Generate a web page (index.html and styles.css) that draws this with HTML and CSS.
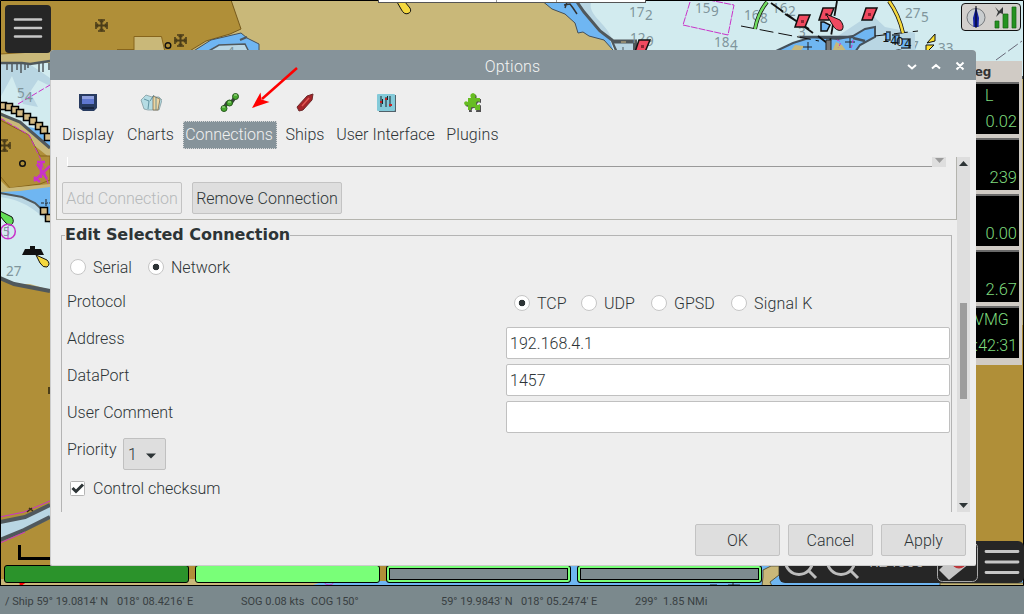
FILE: index.html
```html
<!DOCTYPE html>
<html lang="en">
<head>
<meta charset="utf-8">
<title>Options</title>
<link rel="stylesheet" href="styles.css">
</head>
<body>
<div class="screen">
  <main class="chart">
    <svg class="map" width="1024" height="586" viewBox="0 0 1024 586">
      <defs>
        <g id="church" fill="none" stroke="#4b3d18"><path d="M0-6V6M-6 0H6" stroke-width="2"/><path d="M-3.500-5.500H3.500M-3.500 5.500H3.500M-5.500-3.500V3.500M5.500-3.500V3.500" stroke-width="1.600"/><path d="M-2-4H2M-2 4H2M-4-2V2M4-2V2" stroke-width="1.400"/></g>
        <g id="buoy"><path d="M-3-6H8L3 6H-7Z" fill="#f04a60" stroke="#111" stroke-width="1.500"/><path d="M-1-1H2V2H-1Z" fill="#8d2534"/></g>
        <path id="tile" d="M-3.500-3.500H3.500V3.500H-3.500Z" fill="#d2b983" stroke="#000" stroke-width="1.500"/>
      </defs>
      <rect width="1024" height="586" fill="#b08f38"/>
      <!-- north-west shore -->
      <path d="M231 0H620V52H188L206 41L230 34L241 29Z" fill="#c9b879" stroke="#76591c"/>
      <path d="M134 52V36.500H161.500L165 52Z" fill="#c9b879" stroke="#87651c"/>
      <path d="M0 54L50 50V64L0 63Z" fill="#c9b879"/>
      <path d="M0 54L50 51M117 49.500H134" fill="none" stroke="#87651c"/>
      <path d="M0 63H50V155L24 126L0 112Z" fill="#d2ebef"/>
      <path d="M0 63H28L50 78V86L38 80L30 92L38 107L23 104L12 76L0 98Z" fill="#b9d6e3"/>
      <path d="M0 63H22L30 64L50 61" fill="none" stroke="#50585c" stroke-width="2.500"/>
      <path d="M7 63V70M12 63V72M17 63V70M21 63V73M25 63V70M28 63V68M39 63V72M43 63V72M49 63V70" stroke="#50585c" stroke-width="1.500"/>
      <path d="M24 126L44 130L50 138V150Z" fill="#6fb6f2"/>
      <path d="M0 112L22 123L50 147V158L35 146L20 130L0 118Z" fill="#c9b879"/>
      <path d="M0 114L20 122L50 148" fill="none" stroke="#50585c" stroke-width="3"/>
      <path d="M0 120L29 135L40 156H50V180L40 184L10 188L0 176V120Z" fill="#b08f38" stroke="#87651c"/>
      <path d="M18 104L50 85M0 118L29 135L41 160L50 190" stroke="#c933c9" fill="none" stroke-dasharray="6 2"/>
      <use href="#tile" x="3" y="106"/><use href="#tile" x="9" y="107"/><use href="#tile" x="15" y="110"/><use href="#tile" x="20" y="113"/><use href="#tile" x="27" y="117"/><use href="#tile" x="33" y="121"/><use href="#tile" x="39" y="126"/><use href="#tile" x="44" y="130"/><use href="#tile" x="48" y="137"/>
      <g class="sounding"><text x="17" y="98">5</text><text x="25" y="102">4</text></g>
      <path d="M192 52L211 40L241 33L247 38L259 44V52Z" fill="#6fb6f2" stroke="#44505a"/>
      <path d="M207 52L219 45L245 44L249 52Z" fill="#b9d6e3" stroke="#50585c" stroke-width="1.500"/>
      <path d="M240 40L247 37" stroke="#50585c" stroke-width="2"/>
      <text class="sounding" x="227" y="57">4</text>
      <use href="#church" x="101.500" y="25.500"/><use href="#church" x="180.500" y="40.500"/><use href="#church" x="4.500" y="145.500"/>
      <circle cx="168" cy="45.500" r="2.800" fill="none" stroke="#111" stroke-width="1.400"/>
      <!-- west bay -->
      <path d="M0 180L8 188L50 184V295H0Z" fill="#c9b879"/>
      <path d="M0 192L20 191L50 187V220L34 202L0 193Z" fill="#6fb6f2"/>
      <path d="M0 194L25 198L37 205L50 219V290L30 284L12 284L0 278Z" fill="#d2ebef"/>
      <path d="M0 197C25 200 38 212 50 224V215L35 203L22 197L0 193Z" fill="#b9d6e3"/>
      <path d="M0 193L22 197L35 203L50 217" fill="none" stroke="#50585c" stroke-width="2"/>
      <path d="M0 277L14 284L50 290V300H0Z" fill="#b08f38"/>
      <path d="M0 278L14 284L50 291" fill="none" stroke="#50585c" stroke-width="4"/>
      <circle cx="22.500" cy="163.500" r="2.800" fill="none" stroke="#111" stroke-width="1.500"/>
      <path d="M34 181L50 166M37 162H45M37 164L47 179M41 163V178M34 177L40 182" fill="none" stroke="#c933c9" stroke-width="2.500"/>
      <path d="M41 203H50M46 199V212" stroke="#222" stroke-dasharray="3 1"/>
      <use href="#tile" x="44" y="211"/><use href="#tile" x="49" y="218"/>
      <path d="M0 211L12 217Q15 222 11 225Q8 226 5 222L0 216Z" fill="#61dd55" stroke="#111"/>
      <circle cx="8" cy="231.500" r="7.300" fill="none" stroke="#c933c9" stroke-width="1.500"/><path d="M8 226V238" stroke="#c933c9"/>
      <text class="sounding small" x="3" y="236">5</text>
      <path d="M22 255L25 249H30V246H35V249H41L44 255Z" fill="#111"/>
      <path d="M36 255L47 260Q51 264 47 267Q43 268 40 263Z" fill="#f4d83e" stroke="#111"/>
      <text class="sounding" x="6" y="276">27</text>
      <path d="M48 387H51V394H48Z" fill="#4b3d18"/>
      <path d="M0 522L25 517L50 506V519L24 531L0 540Z" fill="#b9d6e3"/>
      <path d="M0 522L25 517L50 505M0 540L24 530L50 517" stroke="#50585c" stroke-width="4" fill="none"/>
      <path d="M0 517L24 512L50 501M0 543L25 532" stroke="#c933c9" fill="none"/>
      <path d="M27 512L32 508M29 508L33 511" stroke="#3b3014" stroke-width="1.500"/>
      <path d="M19.500 545V558.500H52" stroke="#000" stroke-width="3" fill="none"/>
      <!-- northern fairway -->
      <path d="M541 0L552 9L565 14L575 23L578 33L583 32L589 36L604 40L613 50H1024V0Z" fill="#6fb6f2" stroke="#44505a"/>
      <path d="M577 0L595 23L609 37L614 52H976V78H1024V0Z" fill="#d2ebef"/>
      <path d="M577 0H592C585 14 606 22 612 39L600 33Z" fill="#b9d6e3"/>
      <path d="M577 2L584 12L600 31L612 40L617 52" fill="none" stroke="#50585c" stroke-width="3"/>
      <path d="M614 43H634L637 52H618Z" fill="#b9d6e3"/>
      <path d="M612 41.500H635V52" fill="none" stroke="#50585c" stroke-width="4"/><path d="M621 42H626" stroke="#d2b983"/><path d="M623 47V52" stroke="#50585c"/>
      <path d="M564 5L570 4L573 8L577 14M567 2L565 8" fill="none" stroke="#333" stroke-width="1.500"/>
      <path d="M397 2H405L410 8Q412 12 408 13.500Q404 15 401 9Z" fill="#f4d83e" stroke="#111"/>
      <path d="M690 2L683 25L728 35L734 5L709 0" fill="none" stroke="#c933c9" stroke-dasharray="7 1"/>
      <g class="sounding">
        <text x="629" y="17">17</text><text x="645" y="20">2</text>
        <text x="630" y="43">12</text><text x="646" y="46">9</text>
        <text x="695" y="13">15</text><text x="711" y="16">9</text>
        <text x="714" y="47">18</text><text x="730" y="50">4</text>
        <text x="744" y="20">16</text><text x="760" y="23">8</text>
        <text x="772" y="13">16</text><text x="788" y="16">2</text>
        <text x="905" y="18">27</text><text x="921" y="22">5</text>
        <text x="911" y="51">7</text><text x="938" y="53">33</text><text x="798" y="37">3</text><text x="862" y="27">31</text>
      </g>
      <use href="#buoy" x="642" y="46"/>
      <path d="M835 38L859 22L871 14L885 27L915 33V52H835Z" fill="#b9d6e3"/>
      <path d="M774 52L793 43L812 37L838 39L853 36L865 29L875 27V37L860 45L855 52Z" fill="#6fb6f2" stroke="#44505a" stroke-width="2"/>
      <path d="M790 52L795 45L804 46L800 52M832 52L836 42L842 45L847 52Z" fill="#c9b879"/>
      <path d="M800 37H853M853 38L865 41" stroke="#44505a" stroke-width="2.500"/>
      <path d="M741 26L819 41M875 36L918 31" stroke="#111" stroke-dasharray="14 5" fill="none"/>
      <path d="M771 3L813 33M785 14L809 29M837 1L830 42M818 36L827 43" stroke="#111" stroke-width="1.800" stroke-dasharray="15 4" fill="none"/>
      <path d="M767 2Q758 13 755 29" stroke="#111" stroke-width="4" fill="none"/><path d="M767 2Q758 13 755 29" stroke="#72dc62" stroke-width="2.500" fill="none"/>
      <path d="M889 1Q899 15 903 33" stroke="#111" stroke-width="4" fill="none"/><path d="M889 1Q899 15 903 33" stroke="#f4d83e" stroke-width="2.500" fill="none"/>
      <use href="#buoy" x="802" y="21"/><use href="#buoy" x="826" y="14"/><use href="#buoy" x="869" y="14"/>
      <path d="M826 14L840 20Q845 26 842 30Q836 32 832 24Z" fill="#f04a60" stroke="#111"/>
      <path d="M821 22V31H827L830 25L824 22Z" fill="#6fb6f2" stroke="#111" stroke-width="1.500"/>
      <path d="M826 40H831V52H826Z" fill="#777" stroke="#222"/>
      <path d="M803 47H812M808 42V52M845 42H855M850 38V48" stroke="#222"/>
      <path d="M837 40Q843 41 838 48M853 40L851 50" stroke="#c933c9" fill="none" stroke-dasharray="3 2"/>
      <path d="M886 32H890V40H885M892 35H899V43H892M902 39H910V48H901" stroke="#303b43" stroke-width="1.500" fill="#6fb6f2"/>
      <text class="depth" x="882" y="42">1</text><text class="depth" x="890" y="45">4</text><text class="depth" x="896" y="46">0</text><text class="depth" x="904" y="48">4</text>
      <path d="M893 52Q899 46 904 52Z" fill="#50585c"/>
      <path d="M927 43L935 34V41ZM926 45H934L926 53Z" fill="#ffe22e" stroke="#111"/>
      <path d="M996 60L1022 41" stroke="#667" stroke-dasharray="12 3"/>
      <path d="M976 365H1024V586H976Z" fill="#b08f38"/><path d="M1020 78H1024V325H1020Z" fill="#c9b879"/><path d="M1020 76H1024V79H1020Z" fill="#50585c"/>
      <path d="M0 579H380V586H0Z" fill="#c9b879"/><path d="M20 585L24 582" stroke="red" stroke-width="3"/>
      <path d="M310 586H1024V566H560V581H325Z" fill="#6fb6f2"/>
      <path d="M763 577V570L771 566H779V575L770 582L772 586H762ZM940 583H1024V586H940Z" fill="#c9b879" stroke="#5d573b"/>
      <circle cx="329" cy="579" r="6" stroke="#c933c9" fill="none"/>
      <path d="M710 585H717M728 585H740M733 583V586" stroke="#222"/>
      <path d="M.5 586V.5H1023.500V585.500H0" stroke="#000" fill="none"/>
    </svg>
    <div class="topstrip"><i></i><i></i></div>
    <button class="menu" aria-label="Menu"><svg width="46" height="48"><path d="M10 14.500H36M10 23H36M10 31.500H36" stroke="#c6c6c6" stroke-width="2.600" stroke-linecap="round"/></svg></button>
    <div class="gps">
      <svg width="60" height="29" viewBox="0 0 60 29">
        <circle cx="14" cy="13.500" r="9" fill="#c9cdcf" stroke="#75797c"/><path d="M14 3L17 14L16.500 23H11.500L11 14Z" fill="#1522a5"/><path d="M14 2V24" stroke="#000"/>
        <path d="M33 17H37V24H33ZM41 10H46V24H41ZM50 3H54V24H50Z" fill="#249320" stroke="#176414" stroke-width=".7"/><path d="M33 3L37 7L41 3V10L38 9L34 13L36 8Z" fill="#353839"/>
      </svg>
    </div>
    <aside class="dashboard">
      <div class="dash-title">Leg</div>
      <div class="gauge"><span class="name name-l">L</span><span>0.02</span></div>
      <div class="gauge"><span>239</span></div>
      <div class="gauge"><span>0.00</span></div>
      <div class="gauge"><span>2.67</span></div>
      <div class="gauge"><span class="name">VMG</span><span class="ttg">:42:31</span></div>
    </aside>
    <div class="keys"><i class="key dark"></i><i class="key light"></i><i class="key hollow"></i><i class="key hollow"></i></div>
    <div class="canvas-tools">
      <svg width="245" height="42" viewBox="0 0 245 42"><g fill="none" stroke="#bdbdbd" stroke-width="3"><circle cx="20" cy="20" r="13.500"/><path d="M29 29L37 37M16 21H24M20 17V25"/><circle cx="62" cy="20" r="13.500"/><path d="M71 29L79 37"/></g><rect x="158.500" y="1.500" width="40" height="39" rx="5" fill="none" stroke="#aaa"/><path d="M160 29L177 12L191 22L170 39Z" fill="#c6c6c6"/><circle cx="180" cy="20" r="7.500" fill="#bd373b"/><path d="M207 10.500H239M207 21H239M207 31.500H239" stroke="#c6c6c6" stroke-width="2.800" stroke-linecap="round"/></svg>
      <span class="scale">1:24000</span>
    </div>
  </main>
  <footer class="status"><span class="s1">/ Ship 59° 19.0814' N</span><span class="s2">018° 08.4216' E</span><span class="s3">SOG 0.08 kts</span><span class="s4">COG 150°</span><span class="s5">59° 19.9843' N</span><span class="s6">018° 05.2474' E</span><span class="s7">299°</span><span>1.85 NMi</span></footer>

  <section class="dialog">
    <header class="titlebar"><span class="title">Options</span>
      <svg class="winbtns" width="64" height="30"><g fill="none" stroke="#fff" stroke-width="2"><path d="M4 15L8 18.500L12 15M28 18.500L32 15L36 18.500M52.500 12.500L59.500 19.500M59.500 12.500L52.500 19.500"/></g></svg>
    </header>
    <nav class="tabs">
      <div class="tab t-display"><svg width="22" height="22"><path d="M2 3H20V17L17 20H6L2 17Z" fill="#283b60"/><path d="M5 5H17V13H5Z" fill="#6078d0"/><path d="M5 5H17V8H5Z" fill="#8fa0df"/><path d="M5 16H17V18H5Z" fill="#17243e"/></svg><span>Display</span></div>
      <div class="tab t-charts"><svg width="22" height="22"><path d="M1 9L6 4L12 6L19 6L22 9L19 19H8L4 18Z" fill="#b5dce4" stroke="#789298" stroke-width=".7"/><path d="M13 5L20 8L18 19H13Z" fill="#ebd6a5" stroke="#775f40" stroke-width=".7"/><path d="M4 8L9 10L8 18M16 6V19M10 10L14 4" fill="none" stroke="#4d8190" stroke-width=".8"/></svg><span>Charts</span></div>
      <div class="tab t-conn active"><svg width="22" height="22"><path d="M5 17L8 12L12 12L17 5" stroke="#3a423e" stroke-width="3.500" fill="none"/><g fill="#48a82f" stroke="#24581b"><circle cx="5" cy="17.500" r="3"/><circle cx="10.500" cy="12" r="3"/><circle cx="16.500" cy="5.500" r="3"/></g><path d="M3 16H6M15 4H18M9 11H12" stroke="#b0e398"/></svg><span>Connections</span></div>
      <div class="tab t-ships"><svg width="22" height="22"><path d="M3 16L13 5L19 3L18 9L9 19L5 20Z" fill="#a52328" stroke="#6c292a"/><path d="M8 15L15 7" stroke="#df5753" stroke-width="1.500"/></svg><span>Ships</span></div>
      <div class="tab t-ui"><svg width="22" height="22"><path d="M3 4H21V21H4Z" fill="#52616a"/><rect x="2" y="3" width="18" height="17" rx="1" fill="#84cad9"/><path d="M6 5V16M11 6V16M15 5V16" stroke="#17252b"/><path d="M5 11H8M10 8H13M14 14H17" stroke="#c82222" stroke-width="2"/><path d="M7.500 8V13M12.500 5V9" stroke="#17252b"/></svg><span>User Interface</span></div>
      <div class="tab t-plug"><svg width="22" height="22"><path d="M7 7H9Q7 3 11 2Q15 3 13 7H18V11Q14 9 14 13Q15 15 18 13V20H13Q14 16 11 16Q8 16 9 20H6V14Q3 16 2 12Q3 9 6 11V7Z" fill="#505050" transform="translate(1 1)"/><path d="M7 7H9Q7 3 11 2Q15 3 13 7H18V11Q14 9 14 13Q15 15 18 13V19H13Q14 16 11 16Q8 16 9 19H6V14Q3 16 2 12Q3 9 6 11V7Z" fill="#67bd22"/></svg><span>Plugins</span></div>
      <svg class="pointer" width="56" height="48" viewBox="0 0 56 48"><path d="M49 5L14 36" stroke="#f00" stroke-width="2.500"/><path d="M4 45L12.500 29.500L13.500 36.500L21.500 39Z" fill="#f00"/></svg>
    </nav>
    <div class="scrollarea">
      <div class="page">
        <div class="connections">
          <div class="list"><div class="list-edge"></div><svg width="14" height="10"><path d="M0 0H14V10H0Z" fill="#dedede"/><path d="M3 1H12L7.500 6Z" fill="#9b9b9b"/></svg></div>
          <div class="actions"><button class="btn add" disabled>Add Connection</button><button class="btn remove">Remove Connection</button></div>
        </div>
        <div class="group">
          <h2>Edit Selected Connection</h2>
          <div class="kind"><span class="radio r-serial"><i></i>Serial</span><span class="radio on"><i></i>Network</span></div>
          <div class="row first"><label>Protocol</label><div class="protocols"><span class="radio on r-tcp"><i></i>TCP</span><span class="radio r-udp"><i></i>UDP</span><span class="radio r-gpsd"><i></i>GPSD</span><span class="radio wide"><i></i>Signal K</span></div></div>
          <div class="row"><label>Address</label><div class="field">192.168.4.1</div></div>
          <div class="row"><label>DataPort</label><div class="field">1457</div></div>
          <div class="row"><label>User Comment</label><div class="field"></div></div>
          <div class="priority"><label>Priority</label><div class="select">1<svg width="10" height="6"><path d="M0 .5H10L5 5.500Z" fill="#2d3436"/></svg></div></div>
          <div class="check"><svg width="15" height="15"><rect x=".5" y=".5" width="14" height="14" rx="1" fill="#fff" stroke="#b5b5b5"/><path d="M2.500 7L6 10.500L13 3.500" fill="none" stroke="#2d3436" stroke-width="3"/></svg>Control checksum</div>
        </div>
      </div>
      <div class="scrollbar"><svg width="13" height="13"><path d="M2 9H11L6.500 4Z" fill="#2d3436"/></svg><i class="thumb"></i><svg width="13" height="13"><path d="M2 4H11L6.500 9Z" fill="#2d3436"/></svg></div>
    </div>
    <footer class="buttons"><button class="btn">OK</button><button class="btn">Cancel</button><button class="btn">Apply</button></footer>
  </section>
</div>
</body>
</html>
```
FILE: styles.css
```css
* { box-sizing: border-box; }
body { margin: 0; overflow: hidden; }
.screen { position: relative; width: 1024px; height: 614px; overflow: hidden; display: flex; flex-direction: column; font: 300 16px/20px Roboto, sans-serif; color: #2d3436; }
button { font: inherit; color: inherit; padding: 0; }
svg { display: block; flex: none; }
.chart { position: relative; height: 586px; flex: none; }
.sounding { font: 13.5px "Noto Sans", sans-serif; fill: #7f959c; }
.small { font-size: 12px; }
.depth { font: 12px "DejaVu Sans", sans-serif; fill: #111; }
.topstrip { position: absolute; left: 378px; top: 0; width: 268px; height: 3px; background: #fff; border: solid #555; border-width: 0 1px 1px; display: flex; gap: 59px; padding-left: 117px; }
.topstrip i { width: 1px; background: #999; }
.menu { position: absolute; left: 5px; top: 5px; width: 46px; height: 48px; border: 0; border-radius: 4px; background: #262626; }
.gps { position: absolute; left: 961px; top: 3px; width: 60px; height: 28px; border: 1px solid #111; border-radius: 4px; background: #d3d0cd; overflow: hidden; }
.dashboard { position: absolute; left: 940px; top: 61px; width: 82px; height: 304px; padding-right: 3px; background: #d0cbc5; display: flex; flex-direction: column; gap: 4px; }
.dash-title { height: 17px; padding: 2px 0 0 27px; font: bold 12px/18px "DejaVu Sans", sans-serif; color: #333; }
.gauge { height: 52px; flex: none; border-top: 2px solid #696969; background: #000; color: #7edb7e; display: flex; flex-direction: column; justify-content: flex-end; align-items: flex-end; padding: 0 2px 1px 0; font-size: 16.5px; line-height: 22px; }
.name { align-self: flex-start; padding-left: 34px; font-size: 16px; margin-bottom: 4px; }
.name-l { padding-left: 45px; }
.ttg { font-size: 16px; }
.keys { position: absolute; left: 4px; top: 565px; display: flex; gap: 6px; }
.key { width: 185px; height: 18px; border: 1px solid #000; border-radius: 3px; }
.dark { background: #2b932b; }
.light { background: #79ff78; }
.hollow { background: #7d8b8f; box-shadow: inset 0 0 0 2px #79ff78, inset 0 0 0 3px #000; }
.canvas-tools { position: absolute; left: 779px; top: 541px; width: 245px; height: 42px; border-radius: 6px; background: #262626; }
.scale { position: absolute; left: 87px; top: 11px; color: #c6c6c6; font-size: 16.5px; font-weight: 300; }
.status { height: 28px; flex: none; background: #7b898d; display: flex; padding: 3px 0 0 5px; font: 400 11px/26px Roboto, sans-serif; color: #393f42; white-space: nowrap; }
.s1 { width: 112px; } .s2 { width: 124px; } .s3 { width: 70px; } .s4 { width: 130px; } .s5 { width: 80px; } .s6 { width: 114px; } .s7 { width: 28px; }
.dialog { position: absolute; left: 50px; top: 50px; width: 926px; height: 516px; background: #eee; border-left: 1px solid #ccc; border-bottom: 1px solid #ccc; border-radius: 4px 4px 2px 2px; display: flex; flex-direction: column; }
.titlebar { height: 30px; margin-left: -1px; background: #86939a; color: #f3f3f3; border-radius: 4px 4px 0 0; display: flex; justify-content: flex-end; flex: none; }
.title { flex: 1; text-align: center; padding: 7px 0 0 71px; letter-spacing: .2px; }
.winbtns { margin-right: 8px; }
.tabs { position: relative; height: 77px; flex: none; display: flex; padding: 11px 0 0 7px; gap: 6px; }
.tab { display: flex; flex-direction: column; align-items: center; gap: 8px; white-space: nowrap; }
.tab span { height: 28px; width: 100%; text-align: center; line-height: 27px; }
.t-display { width: 60px; } .t-charts { width: 53px; } .t-conn { width: 94px; } .t-ships { width: 44px; } .t-ui { width: 105px; } .t-plug { width: 57px; }
.t-display span { letter-spacing: .2px; }
.t-conn span { letter-spacing: -.05px; padding-right: 2px; }
.t-plug span { letter-spacing: .1px; }
.active span { background: #86939a; color: #f1f1f1; outline: 1px dotted #d8d8d8; outline-offset: -1px; }
.pointer { position: absolute; left: 197px; top: -17px; }
.scrollarea { height: 355px; flex: none; display: flex; overflow: hidden; }
.page { width: 906px; padding-left: 5px; flex: none; }
.connections { width: 901px; height: 63px; border: solid #b4b4ae; border-width: 0 1px 1px; }
.list { display: flex; height: 10px; padding-left: 10px; }
.list-edge { width: 865px; border-left: 1px solid #fff; border-bottom: 1px solid #999; }
.actions { display: flex; gap: 10px; padding: 15px 0 0 5px; }
.btn { height: 32px; border: 1px solid #c3c3c3; border-radius: 2px; background: #dedede; white-space: nowrap; padding-top: 1px; }
.add { width: 120px; background: #ebebeb; color: #b5b8b9; }
.remove { width: 150px; letter-spacing: .03px; }
.group { margin: 15px 0 0 5px; width: 891px; height: 290px; border: 1px solid #b4b4b4; padding-left: 5px; }
h2 { margin: -11px 0 0 -2px; width: 225px; background: #eee; font: bold 16px/20px "DejaVu Sans", sans-serif; letter-spacing: -.04px; white-space: nowrap; }
.kind { display: flex; padding: 13px 0 0 3px; }
.radio { display: flex; align-items: center; gap: 7px; white-space: nowrap; height: 20px; }
.radio i { width: 16px; height: 16px; margin-bottom: 2px; border: 1px solid #c6c6c6; border-radius: 50%; background: #fff; }
.radio.on i { background: radial-gradient(circle, #2d3436 3px, #fff 3.600px); }
.wide { letter-spacing: .2px; }
.r-serial { width: 78px; } .r-tcp { width: 67px; } .r-udp { width: 70px; } .r-gpsd { width: 80px; }
.row { display: grid; grid-template-columns: 439px 444px; height: 37px; align-items: start; }
.row.first { height: 49px; padding-top: 14px; }
.protocols { display: flex; padding: 2px 0 0 8px; }
.field { height: 32px; border: 1px solid #c0c0c0; border-radius: 2px; background: #fff; padding: 6px 3px; letter-spacing: .05px; }
.row label { padding-top: 2px; }
.row.first label { padding-top: 0; }
.priority { display: flex; height: 32px; gap: 6px; }
.priority label { width: 50px; padding-top: 2px; white-space: nowrap; }
.select { width: 43px; height: 32px; border: 1px solid #c0c0c0; border-radius: 2px; background: #dedede; display: flex; align-items: center; gap: 9px; padding: 1px 0 0 4px; }
.select svg { margin-top: 3px; }
.check { display: flex; align-items: center; gap: 8px; padding: 9px 0 0 3px; }
.check svg { margin-bottom: 2px; }
.scrollbar { width: 13px; background: #dedede; display: flex; flex-direction: column; align-items: center; }
.thumb { width: 7px; height: 96px; margin: 133px 0 100px; background: #9d9d9d; }
.buttons { display: flex; justify-content: flex-end; gap: 8px; padding: 12px 10px 0 0; }
.buttons .btn { width: 85px; }
```
